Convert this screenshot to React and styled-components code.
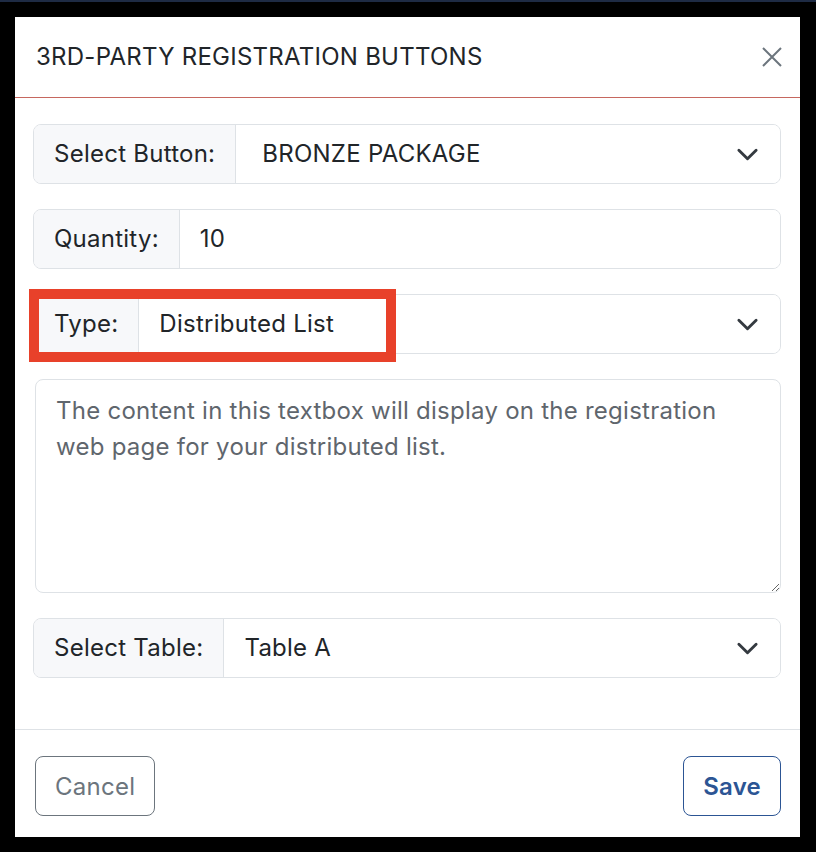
import React from 'react';
import styled, { createGlobalStyle } from 'styled-components';

const GlobalStyle = createGlobalStyle`
  * { box-sizing: border-box; }
  html, body { margin: 0; padding: 0; background: #000; }
  body {
    font-family: Inter, "Noto Sans", "Liberation Sans", sans-serif;
    color: #212529;
    letter-spacing: 0.25px;
  }
`;

const Chevron = () => (
  <svg width="23" height="23" viewBox="0 0 16 16" fill="none">
    <path d="m2 5 6 6 6-6" stroke="#343a40" strokeWidth="2" strokeLinecap="round" strokeLinejoin="round" />
  </svg>
);

const CloseIcon = () => (
  <svg width="20" height="20" viewBox="0 0 20 20" fill="none">
    <path d="M1 1 19 19 M19 1 1 19" stroke="#6c757d" strokeWidth="2" />
  </svg>
);

const Fields = [
  { label: 'Select Button:', value: 'BRONZE PACKAGE', select: true, gap: 26 },
  { label: 'Quantity:', value: '10' },
];

const App = () => {
  return (
    <>
      <GlobalStyle />
      <Backdrop>
        <Modal>
          <Header>
            <Title>3RD-PARTY REGISTRATION BUTTONS</Title>
            <CloseBtn aria-label="close"><CloseIcon /></CloseBtn>
          </Header>
          <Body>
            {Fields.map((f) => (
              <Group key={f.label}>
                <Label>{f.label}</Label>
                <Field $gap={f.gap}>
                  <span>{f.value}</span>
                  {f.select && <Chevron />}
                </Field>
              </Group>
            ))}
            <Marked>
              <Group>
                <Label>Type:</Label>
                <Field>
                  <span>Distributed List</span>
                  <Chevron />
                </Field>
              </Group>
              <Highlight />
            </Marked>
            <TextBox
              readOnly
              value="The content in this textbox will display on the registration web page for your distributed list."
            />
            <Group>
              <Label>Select Table:</Label>
              <Field>
                <span>Table A</span>
                <Chevron />
              </Field>
            </Group>
          </Body>
          <Footer>
            <Button>Cancel</Button>
            <Button $primary>Save</Button>
          </Footer>
        </Modal>
      </Backdrop>
    </>
  );
};

export default App;

const Backdrop = styled.div`
width: 816px;
height: 852px;
background: #000;
border-top: 2px solid #1e2b44;
padding: 15px 0 0 15px;
`
const Modal = styled.div`
width: 785px;
height: 820px;
background: #fff;
display: flex;
flex-direction: column;
`
const Header = styled.div`
height: 81px;
border-bottom: 1px solid #c6675f;
display: flex;
align-items: center;
justify-content: space-between;
padding: 0 18px 0 21px;
`
const Title = styled.h5`
margin: 0;
font-size: 24px;
font-weight: 400;
line-height: 1.5;
`
const CloseBtn = styled.button`
border: none;
background: none;
padding: 0;
display: flex;
cursor: pointer;
`
const Body = styled.div`
flex: 1;
padding: 26px 19px 0 18px;
display: flex;
flex-direction: column;
gap: 25px;
`
const Group = styled.div`
display: flex;
height: 60px;
border: 1px solid #dee2e6;
border-radius: 8px;
overflow: hidden;
font-size: 24px;
line-height: 1.5;
`
const Label = styled.div`
display: flex;
align-items: center;
padding: 0 20px;
background: #f7f8fa;
border-right: 1px solid #dee2e6;
white-space: nowrap;
`
const Field = styled.div`
flex: 1;
display: flex;
align-items: center;
justify-content: space-between;
padding: 0 21px 0 ${(p) => p.$gap || 20}px;
background: #fff;
`
const Marked = styled.div`
position: relative;
`
const Highlight = styled.div`
position: absolute;
left: -4px;
top: -5px;
width: 367px;
height: 73px;
border: 10px solid #e8412a;
pointer-events: none;
`
const TextBox = styled.textarea`
display: block;
margin-left: 2px;
width: calc(100% - 2px);
height: 214px;
border: 1px solid #dee2e6;
border-radius: 8px;
padding: 13px 20px;
font-family: inherit;
font-size: 24px;
line-height: 1.5;
letter-spacing: 0.25px;
color: #5f666d;
resize: vertical;
outline: none;
`
const Footer = styled.div`
height: 108px;
border-top: 1px solid #dee2e6;
display: flex;
align-items: flex-start;
justify-content: space-between;
padding: 26px 19px 0 20px;
`
const Button = styled.button`
height: 60px;
padding: 0 19px;
background: #fff;
border: 1px solid ${(p) => (p.$primary ? '#2c5594' : '#6c757d')};
color: ${(p) => (p.$primary ? '#2c5594' : '#6c757d')};
font-family: inherit;
font-size: 24px;
letter-spacing: 0.25px;
font-weight: ${(p) => (p.$primary ? 600 : 400)};
border-radius: 8px;
cursor: pointer;
`
